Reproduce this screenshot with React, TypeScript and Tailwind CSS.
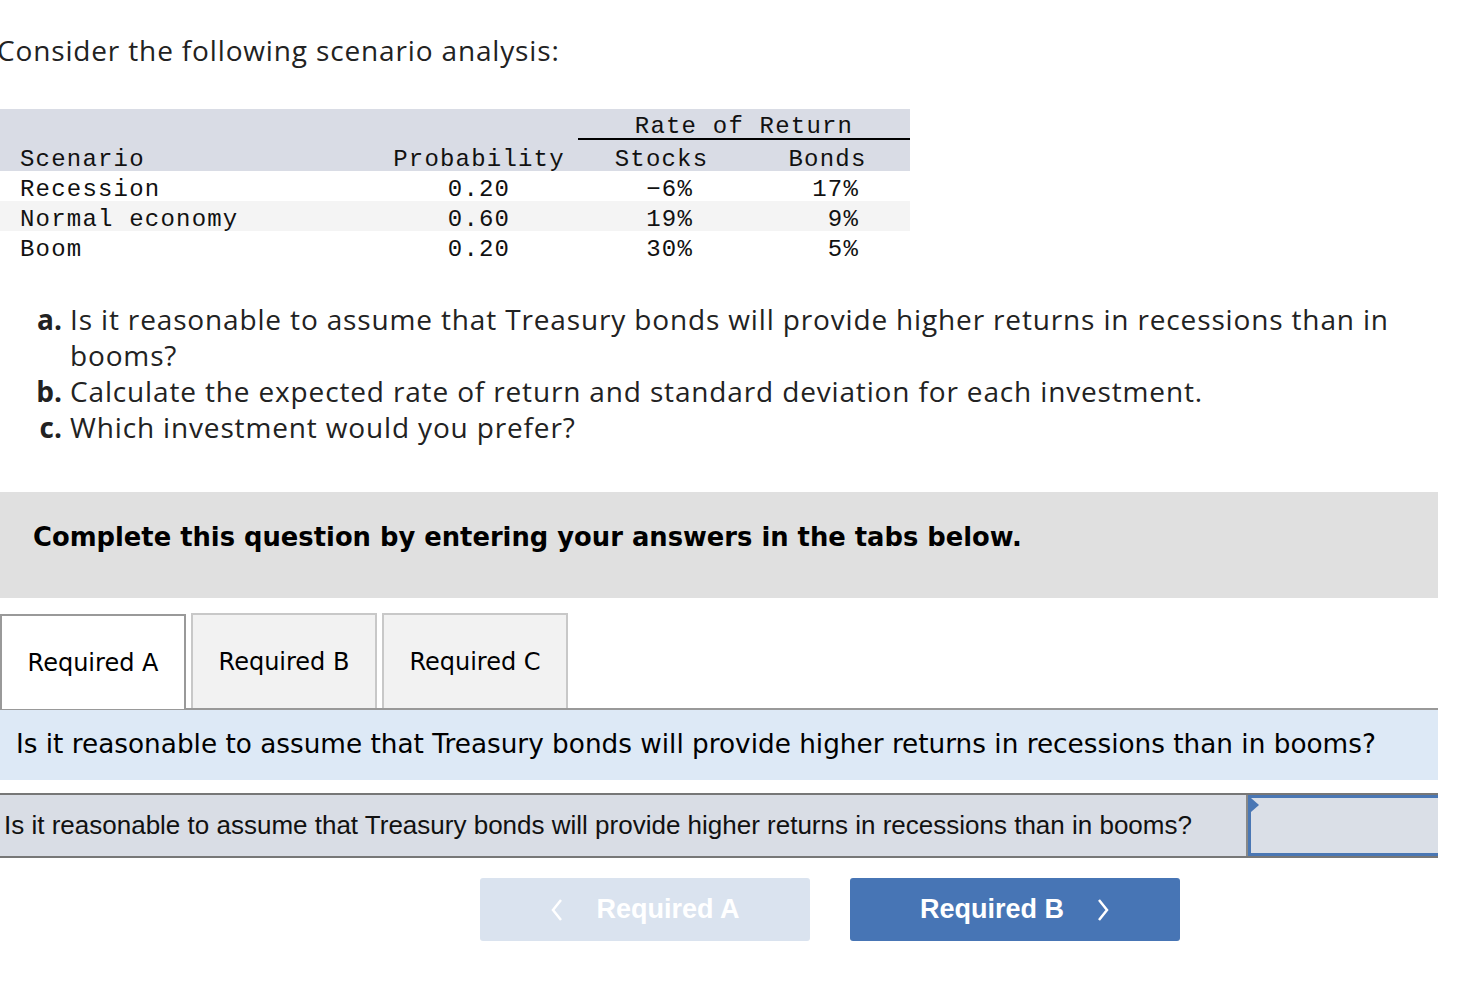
import React from "react";

const rows = [
  { name: "Recession", p: "0.20", s: "−6%", b: "17%", shade: false },
  { name: "Normal economy", p: "0.60", s: "19%", b: "9%", shade: true },
  { name: "Boom", p: "0.20", s: "30%", b: "5%", shade: false },
];

const mono = "font-['Liberation_Mono',monospace] text-[24px] tracking-[1.2px]";
const body = "font-['Open_Sans',sans-serif] tracking-[0.85px]";

function ScenarioTable() {
  return (
    <div className={`w-[910px] mt-[42px] text-[#111] ${mono}`}>
      {/* Header */}
      <div className="bg-[#d9dce5] h-[62px] flex flex-col">
        <div className="flex h-[31px]">
          <div className="w-[578px]" />
          <div className="w-[332px] text-center leading-[31px] border-b-2 border-black pt-[2px]">
            Rate of Return
          </div>
        </div>
        <div className="flex h-[31px] leading-[31px] pt-[4px]">
          <div className="w-[380px] pl-[20px]">Scenario</div>
          <div className="w-[198px] text-center">Probability</div>
          <div className="w-[167px] text-center">Stocks</div>
          <div className="w-[165px] text-center">Bonds</div>
        </div>
      </div>
      {/* Rows */}
      {rows.map((r) => (
        <div
          key={r.name}
          className={`flex h-[30px] leading-[30px] pt-[4px] ${r.shade ? "bg-[#f4f4f4]" : ""}`}
        >
          <div className="w-[380px] pl-[20px]">{r.name}</div>
          <div className="w-[198px] text-center">{r.p}</div>
          <div className="w-[167px] text-right pr-[52px]">{r.s}</div>
          <div className="w-[165px] text-right pr-[51px]">{r.b}</div>
        </div>
      ))}
    </div>
  );
}

function Question({ label, children }: { label: string; children: React.ReactNode }) {
  return (
    <div className="flex">
      <span className="w-[70px] font-bold text-right pr-[8px] shrink-0 tracking-normal">{label}</span>
      <span className="max-w-[1340px]">{children}</span>
    </div>
  );
}

export default function App() {
  return (
    <div className="w-[1458px] h-[994px] bg-white overflow-hidden relative">
      <div className="w-[1438px]">
        {/* Title */}
        <h1 className={`pt-[33px] ml-[-3px] text-[28px] leading-[34px] text-[#222] ${body}`}>
          Consider the following scenario analysis:
        </h1>

        <ScenarioTable />

        {/* Questions */}
        <div className={`mt-[40px] text-[28px] leading-[36px] text-[#222] ${body}`}>
          <Question label="a.">
            Is it reasonable to assume that Treasury bonds will provide higher returns in
            recessions than in booms?
          </Question>
          <Question label="b.">
            Calculate the expected rate of return and standard deviation for each investment.
          </Question>
          <Question label="c.">Which investment would you prefer?</Question>
        </div>

        {/* Instruction box */}
        <div className="mt-[47px] h-[106px] bg-[#e0e0e0] flex items-center pl-[33px] pb-[16px]">
          <p className="font-['DejaVu_Sans',sans-serif] font-bold text-[25.8px] text-black">
            Complete this question by entering your answers in the tabs below.
          </p>
        </div>

        {/* Tabs */}
        <div className="mt-[15px] flex items-end gap-[5px] h-[95px]">
          <div className="w-[186px] h-[95px] bg-white border-2 border-b-0 border-[#999] flex items-center justify-center font-['DejaVu_Sans',sans-serif] text-[24px] text-black relative z-10 -mb-[1px]">
            Required A
          </div>
          <div className="w-[186px] h-[95px] bg-[#f2f2f2] border-2 border-b-0 border-[#c8c8c8] flex items-center justify-center font-['DejaVu_Sans',sans-serif] text-[24px] text-black">
            Required B
          </div>
          <div className="w-[186px] h-[95px] bg-[#f2f2f2] border-2 border-b-0 border-[#c8c8c8] flex items-center justify-center font-['DejaVu_Sans',sans-serif] text-[24px] text-black">
            Required C
          </div>
        </div>
        <div className="border-t-2 border-[#999]" />

        {/* Prompt */}
        <div className="h-[70px] bg-[#dde9f6] flex items-center pl-[16px] font-['DejaVu_Sans',sans-serif] text-[26.3px] text-black">
          Is it reasonable to assume that Treasury bonds will provide higher returns in recessions than in booms?
        </div>

        {/* Answer row */}
        <div className="mt-[13px] h-[65px] flex border-y-2 border-[#777] bg-[#d9dde5]">
          <div className="flex-1 flex items-center pl-[4px] font-['Liberation_Sans',sans-serif] text-[26px] text-[#111]">
            Is it reasonable to assume that Treasury bonds will provide higher returns in recessions than in booms?
          </div>
          <div className="w-[192px] border-l-2 border-[#888]">
            <div className="h-full border-[3px] border-r-0 border-[#4a77b4] bg-[#dadfe7] relative">
              <div className="absolute left-0 top-0 w-0 h-0 border-t-[7px] border-b-[7px] border-l-[8px] border-t-transparent border-b-transparent border-l-[#4a77b4]" />
            </div>
          </div>
        </div>

        {/* Nav buttons */}
        <div className="mt-[20px] flex gap-[40px] pl-[480px]">
          <button className="w-[330px] h-[63px] rounded-[3px] bg-[#dae3ef] flex items-center justify-center gap-[32px] text-white font-['Liberation_Sans',sans-serif] font-bold text-[27px]">
            <svg width="14" height="24" viewBox="0 0 14 24" fill="none" stroke="white" strokeWidth="2.5">
              <path d="M11 2 L3 12 L11 22" />
            </svg>
            <span>Required A</span>
          </button>
          <button className="w-[330px] h-[63px] rounded-[3px] bg-[#4775b5] flex items-center justify-center gap-[32px] text-white font-['Liberation_Sans',sans-serif] font-bold text-[27px]">
            <span>Required B</span>
            <svg width="14" height="24" viewBox="0 0 14 24" fill="none" stroke="white" strokeWidth="2.5">
              <path d="M3 2 L11 12 L3 22" />
            </svg>
          </button>
        </div>
      </div>
    </div>
  );
}
